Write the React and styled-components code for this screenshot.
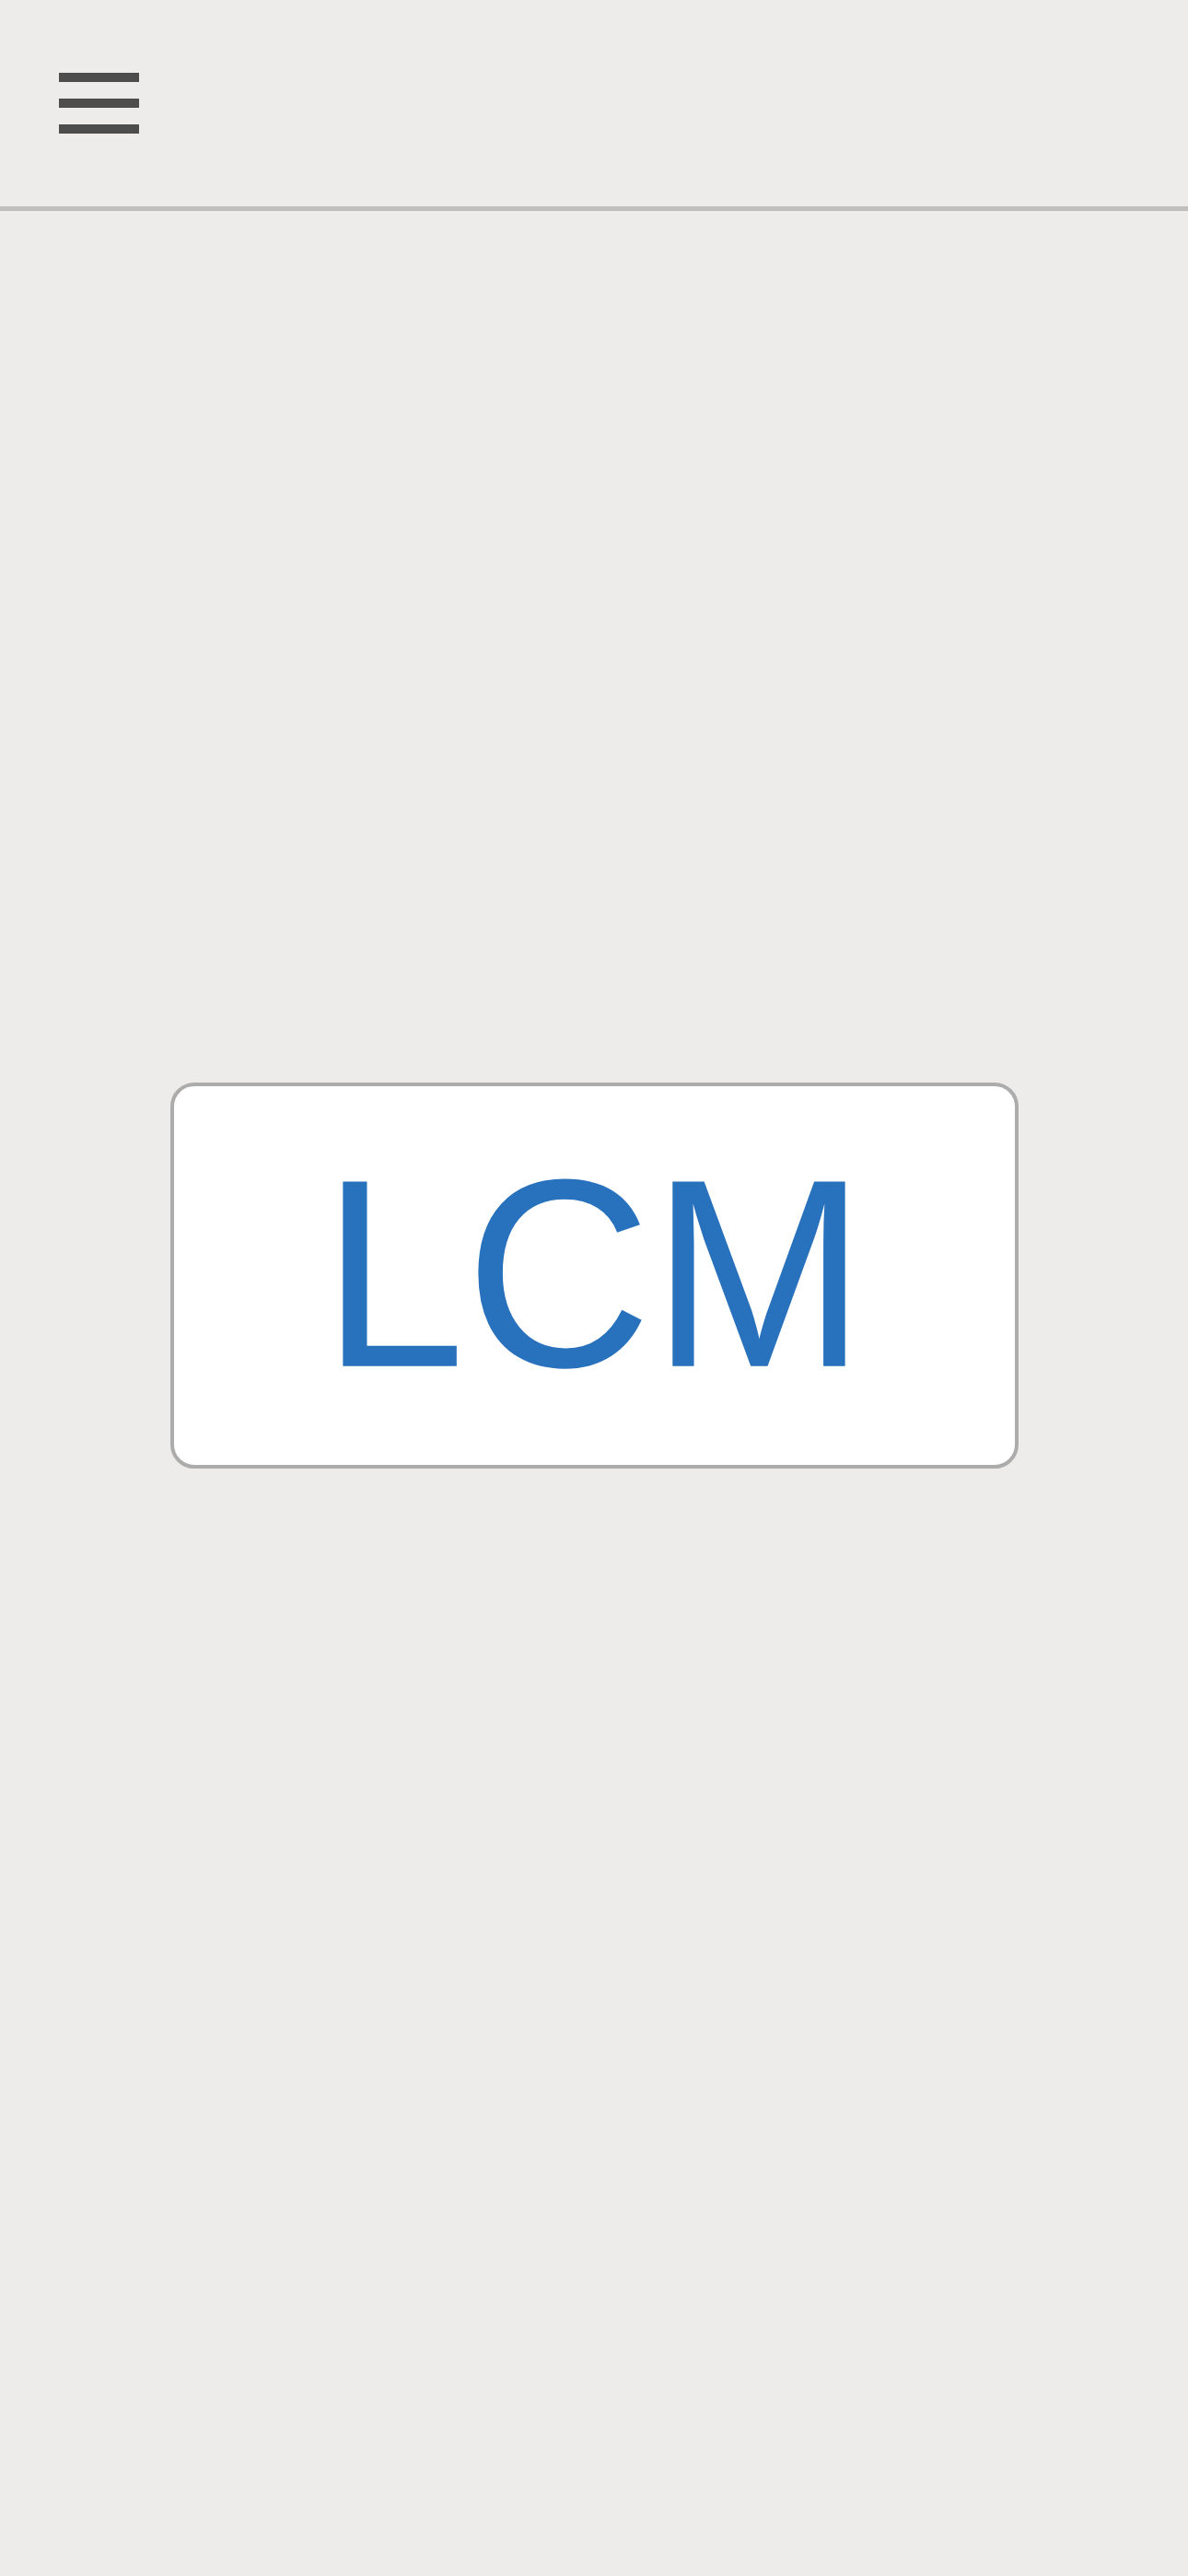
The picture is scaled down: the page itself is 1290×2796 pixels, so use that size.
import React from "react";
import styled, { createGlobalStyle } from "styled-components";

const GlobalStyle = createGlobalStyle`
  html, body {
    margin: 0;
    padding: 0;
    background: #edecea;
    font-family: "Liberation Sans", Arial, sans-serif;
  }
`;

const Page = styled.div`
  min-height: 2796px;
  background: #edecea;
  display: flex;
  flex-direction: column;
`;

const Header = styled.header`
  height: 224px;
  border-bottom: 5px solid #bebebe;
  box-sizing: content-box;
  display: flex;
  align-items: flex-start;
  padding: 0 64px;
`;

const MenuButton = styled.button`
  margin-top: 79px;
  width: 87px;
  padding: 0;
  border: none;
  background: none;
  display: flex;
  flex-direction: column;
  gap: 18px;
  cursor: pointer;
`;

const Bar = styled.span`
  display: block;
  height: 10px;
  width: 100%;
  background: #4d4d4d;
`;

const Main = styled.main`
  display: flex;
  justify-content: center;
  padding-top: 946px;
`;

const Card = styled.div`
  width: 921px;
  height: 419px;
  box-sizing: border-box;
  background: #ffffff;
  border: 4px solid #acacac;
  border-radius: 26px;
  display: flex;
  align-items: center;
  justify-content: center;
`;

/* caps in the shot are a bit taller than Liberation Sans draws them */
const Title = styled.span`
  display: inline-block;
  font-family: "Liberation Sans", Arial, sans-serif;
  font-size: 280px;
  line-height: normal;
  color: #2871bd;
  transform: translateY(-2px) scaleY(1.04);
`;

const App = () => (
  <Page>
    <GlobalStyle />
    <Header>
      <MenuButton aria-label="menu">
        <Bar />
        <Bar />
        <Bar />
      </MenuButton>
    </Header>
    <Main>
      <Card>
        <Title>LCM</Title>
      </Card>
    </Main>
  </Page>
);

export default App;
